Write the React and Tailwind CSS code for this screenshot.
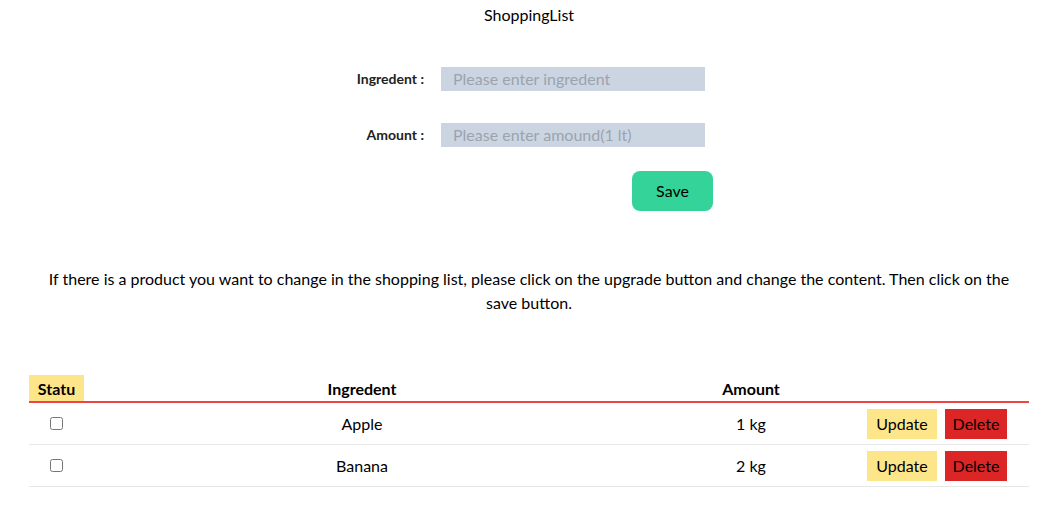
import { useState } from 'react';

const items = [
    { id: 1, name: 'Apple', amount: '1 kg' },
    { id: 2, name: 'Banana', amount: '2 kg' },
];

const App = () => {
    const [ checked, setChecked ] = useState({});

    return (
        <div className="min-h-[531px] bg-white pl-[6px] text-black font-['Lato','Noto_Sans',sans-serif]">
            <h1 className="pt-[3px] text-center text-base leading-6">ShoppingList</h1>

            <form className="mx-auto mt-10 w-[400px] flex flex-col gap-8" onSubmit={ e => e.preventDefault() }>
                <div className="flex items-center">
                    <label className="w-[95px] text-right text-sm font-bold text-[#222]">Ingredent :</label>
                    <input className="ml-[17px] h-6 w-[264px] bg-[#cbd5e1] pl-3 text-base outline-none placeholder:text-[#9ca3af]" placeholder="Please enter ingredent" />
                </div>
                <div className="flex items-center">
                    <label className="w-[95px] text-right text-sm font-bold text-[#222]">Amount :</label>
                    <input className="ml-[17px] h-6 w-[264px] bg-[#cbd5e1] pl-3 text-base outline-none placeholder:text-[#9ca3af]" placeholder="Please enter amound(1 lt)" />
                </div>
            </form>
            <div className="mx-auto mt-6 flex w-[400px] justify-end">
                <button className="mr-4 h-10 w-[81px] rounded-lg bg-[#34d399] text-base">Save</button>
            </div>

            <p className="mx-auto mt-14 w-[976px] text-center text-base leading-6">
                If there is a product you want to change in the shopping list, please click on the upgrade button and change the content. Then click on the save button.
            </p>

            <div className="mt-[60px] ml-[23px] w-[1000px]">
                <div className="grid grid-cols-[55px_556px_222px_167px] border-b-2 border-[#ef4444] font-bold leading-[25px]">
                    <div className="bg-[#fde68a] pt-px text-center">Statu</div>
                    <div className="pt-px text-center">Ingredent</div>
                    <div className="pt-px text-center">Amount</div>
                    <div></div>
                </div>
                {
                    items.map(item => (
                        <div key={ item.id } className="grid h-[42px] grid-cols-[55px_556px_222px_167px] items-center border-b border-[#e5e7eb]">
                            <div className="flex justify-center">
                                <input type="checkbox" checked={ !!checked[ item.id ] } onChange={ () => setChecked(prev => ({ ...prev, [ item.id ]: !prev[ item.id ] })) } />
                            </div>
                            <div className="text-center">{ item.name }</div>
                            <div className="text-center">{ item.amount }</div>
                            <div className="flex gap-2 pl-[5px]">
                                <button className="h-[30px] w-[70px] bg-[#fde68a]">Update</button>
                                <button className="h-[30px] w-[62px] bg-[#dc2626]">Delete</button>
                            </div>
                        </div>
                    ))
                }
            </div>
        </div>
    );
}

export default App;
